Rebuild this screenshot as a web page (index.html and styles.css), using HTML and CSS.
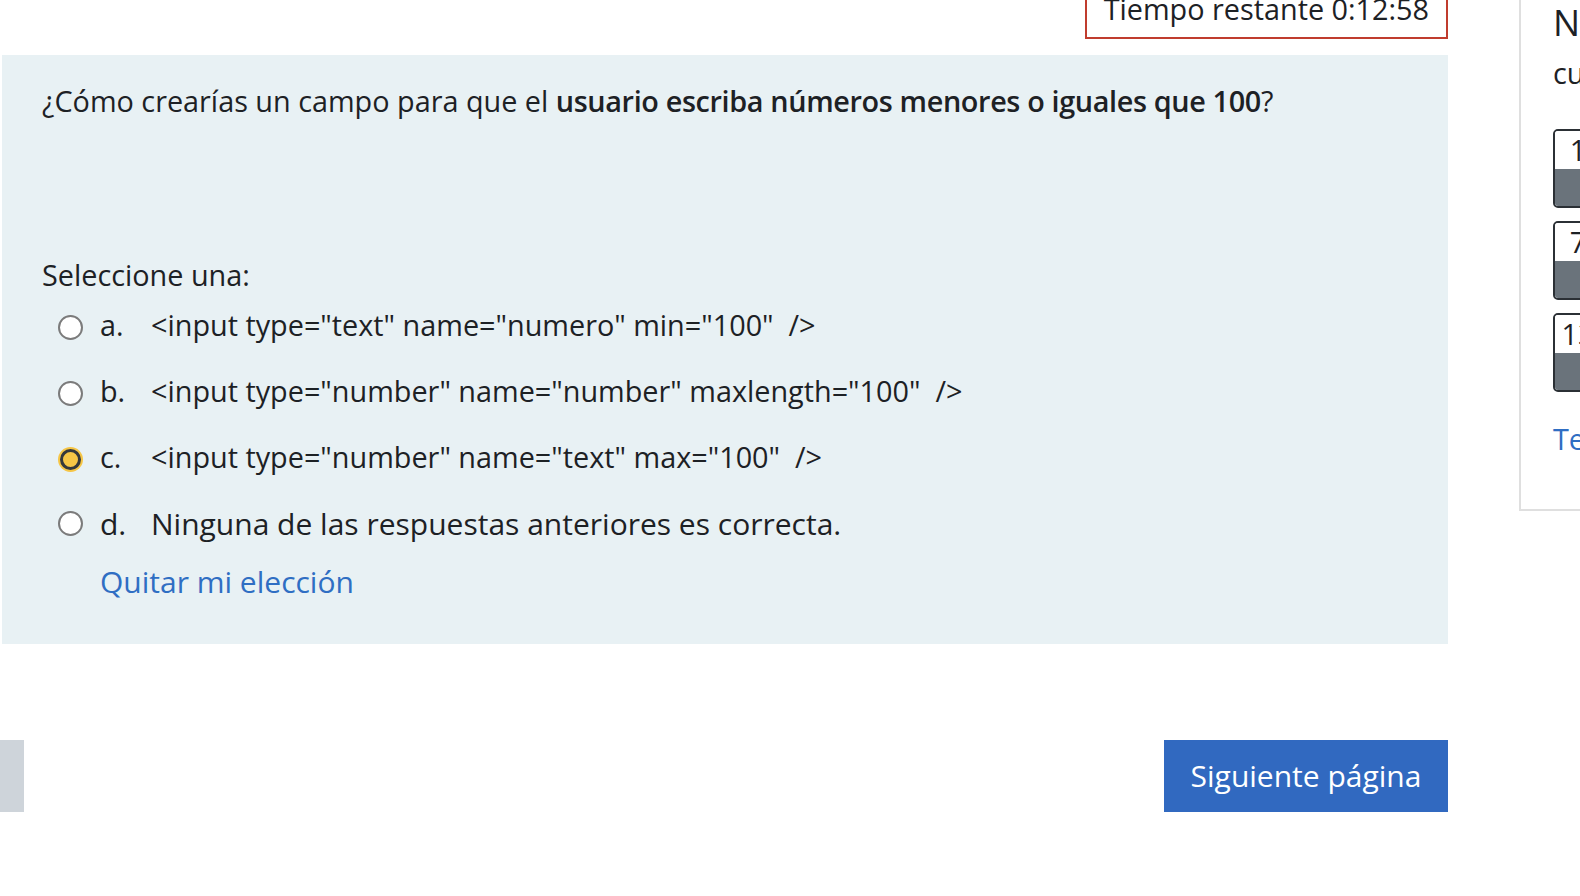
FILE: index.html
```html
<!DOCTYPE html>
<html lang="es">
<head>
<meta charset="utf-8">
<title>Cuestionario</title>
<link rel="stylesheet" href="styles.css">
</head>
<body>
<div class="page">
  <main class="main">
    <div class="timer">Tiempo restante 0:12:58</div>
    <div class="formulation">
      <p class="qtext">¿Cómo crearías un campo para que el <strong>usuario escriba números menores o iguales que 100</strong>?</p>
      <div class="prompt">Seleccione una:</div>
      <div class="answers">
        <label class="opt"><span class="radio"></span><span class="num">a.</span><span class="txt">&lt;input type="text" name="numero" min="100"  /&gt;</span></label>
        <label class="opt"><span class="radio"></span><span class="num">b.</span><span class="txt">&lt;input type="number" name="number" maxlength="100"  /&gt;</span></label>
        <label class="opt"><span class="radio checked"></span><span class="num">c.</span><span class="txt">&lt;input type="number" name="text" max="100"  /&gt;</span></label>
        <label class="opt opt-para"><span class="radio"></span><span class="num">d.</span><span class="txt">Ninguna de las respuestas anteriores es correcta.</span></label>
      </div>
      <a class="clear" href="#">Quitar mi elección</a>
    </div>
    <div class="nav-row">
      <span class="prev-stub"></span>
      <button class="next" type="button">Siguiente página</button>
    </div>
  </main>
  <aside class="side">
    <div class="side-title">Navegación por el</div>
    <div class="side-sub">cuestionario</div>
    <div class="qnav">
      <div class="qbtn"><span class="qnum">1</span><span class="qstate"></span></div>
      <div class="qbtn"><span class="qnum">7</span><span class="qstate"></span></div>
      <div class="qbtn"><span class="qnum">13</span><span class="qstate"></span></div>
    </div>
    <a class="finish" href="#">Terminar intento...</a>
  </aside>
</div>
</body>
</html>
```
FILE: styles.css
```css
html, body {
  margin: 0;
  padding: 0;
  background: #ffffff;
  overflow: hidden;
}

body {
  font-family: "Open Sans", "Noto Sans", sans-serif;
  font-size: 28.8px;
  line-height: 43.2px;
  color: #1d2125;
}

.page {
  display: flex;
  align-items: flex-start;
  margin-top: -22px;
}

.main {
  flex: 0 0 1448px;
  display: flex;
  flex-direction: column;
}

.timer {
  align-self: flex-end;
  border: 2px solid #c03c2e;
  padding: 7px 17px;
  white-space: nowrap;
}

.formulation {
  margin-top: 16px;
  margin-left: 2px;
  background: #e8f1f4;
  padding: 24px 40px 40px 40px;
}

.qtext {
  margin: 0;
}

.qtext strong {
  font-weight: 600;
  letter-spacing: -0.36px;
}

.prompt {
  margin-top: 131px;
}

.answers {
  margin-top: 6px;
  display: flex;
  flex-direction: column;
  gap: 22.8px;
}

.opt {
  display: flex;
  align-items: flex-start;
}

.opt-para {
  font-size: 30px;
  line-height: 45px;
}

.radio {
  flex: 0 0 auto;
  box-sizing: border-box;
  width: 25px;
  height: 25px;
  margin-top: 12px;
  margin-left: 16px;
  border-radius: 50%;
  border: 2px solid #7b7b7b;
  background: #ffffff;
}

.opt-para .radio {
  margin-top: 10px;
}

.radio.checked {
  width: 21px;
  height: 21px;
  margin-top: 14px;
  margin-left: 18px;
  margin-right: 2px;
  border: 3px solid #34383c;
  background: #f6c646;
  box-shadow: 0 0 0 2px #f6c646;
}

.num {
  flex: 0 0 51px;
  margin-left: 17px;
}

.txt {
  white-space: pre-wrap;
}

.clear {
  display: block;
  margin-top: 13px;
  margin-left: 58px;
  font-size: 30px;
  line-height: 45px;
  color: #2f6ec3;
  text-decoration: none;
}

.nav-row {
  margin-top: 96px;
  display: flex;
  justify-content: space-between;
  align-items: stretch;
  height: 72px;
}

.prev-stub {
  width: 24px;
  background: #ced4da;
}

.next {
  width: 284px;
  border: none;
  background: #3169c0;
  color: #ffffff;
  font-family: "Open Sans", "Noto Sans", sans-serif;
  font-size: 30px;
  line-height: 45px;
  padding: 0;
}

.side {
  flex: 0 0 400px;
  margin-left: 71px;
  border-left: 2px solid #dfdfdf;
  border-bottom: 2px solid #dfdfdf;
  padding: 23px 0 49px 32px;
  white-space: nowrap;
}

.side-title {
  font-size: 36px;
  line-height: 44px;
}

.side-sub {
  margin-top: 5.5px;
}

.qnav {
  margin-top: 35px;
  display: flex;
  flex-direction: column;
  gap: 13px;
}

.qbtn {
  box-sizing: border-box;
  width: 50px;
  height: 79px;
  border: 2px solid #2b3035;
  border-radius: 5px;
  overflow: hidden;
  display: flex;
  flex-direction: column;
}

.qnum {
  height: 38px;
  line-height: 38px;
  text-align: center;
  background: #ffffff;
}

.qstate {
  flex: 1;
  background: #6a737b;
}

.finish {
  display: block;
  margin-top: 25.5px;
  color: #2f6ec3;
  text-decoration: none;
}
```
